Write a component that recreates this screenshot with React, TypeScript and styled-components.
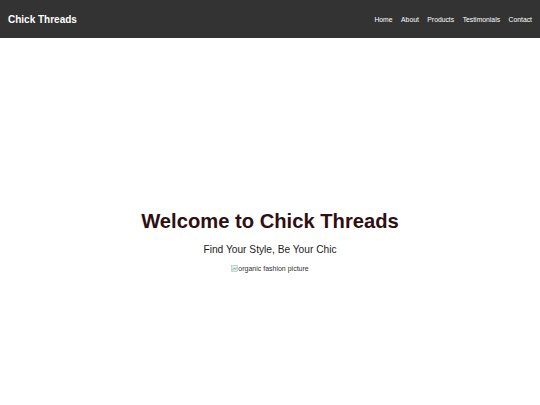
import React from 'react';
import styled, {createGlobalStyle} from 'styled-components';

const GlobalStyle = createGlobalStyle`
    html, body {
        margin: 0;
        padding: 0;
        background: #fff;
        font-family: "Liberation Sans", Arial, sans-serif;
    }
`;

const Header = styled.header`
    height: 38px;
    background: #333333;
    display: flex;
    align-items: center;
    justify-content: space-between;
    padding: 0 8px;
`;

const Logo = styled.div`
    color: #fff;
    font-size: 10px;
    font-weight: bold;
`;

const Nav = styled.nav`
    display: flex;
    gap: 8.5px;
`;

const NavLink = styled.a`
    color: #fff;
    font-size: 6.8px;
    text-decoration: none;

    &:visited {
        color: #fff;
    }
`;

const Hero = styled.section`
    height: 367px;
    display: flex;
    flex-direction: column;
    align-items: center;
    justify-content: center;
    padding-top: 38px;
    box-sizing: border-box;
`;

const Title = styled.h1`
    margin: 0;
    font-size: 20.2px;
    font-weight: bold;
    color: #2e1010;
`;

const Tagline = styled.p`
    margin: 11px 0 0;
    font-size: 10.2px;
    color: #222;
`;

const Broken = styled.span`
    margin-top: 10px;
    display: inline-flex;
    align-items: center;
    font-size: 7px;
    color: #333;
`;

const BrokenIcon = () => (
    <svg width="7" height="7" viewBox="0 0 16 16">
        <rect x="1" y="1" width="14" height="14" fill="#e8ebe8" stroke="#9aa" strokeWidth="1"/>
        <path d="M3 12 L7 7 L10 10 L13 6" stroke="#4a8" fill="none" strokeWidth="1.5"/>
    </svg>
);

const links = ['Home', 'About', 'Products', 'Testimonials', 'Contact'];

export default function App() {
    return <>
        <GlobalStyle/>
        <Header>
            <Logo>Chick Threads</Logo>
            <Nav>
                {links.map(l => <NavLink key={l} href="#">{l}</NavLink>)}
            </Nav>
        </Header>
        <Hero>
            <Title>Welcome to Chick Threads</Title>
            <Tagline>Find Your Style, Be Your Chic</Tagline>
            <Broken><BrokenIcon/>organic fashion picture</Broken>
        </Hero>
    </>;
}
